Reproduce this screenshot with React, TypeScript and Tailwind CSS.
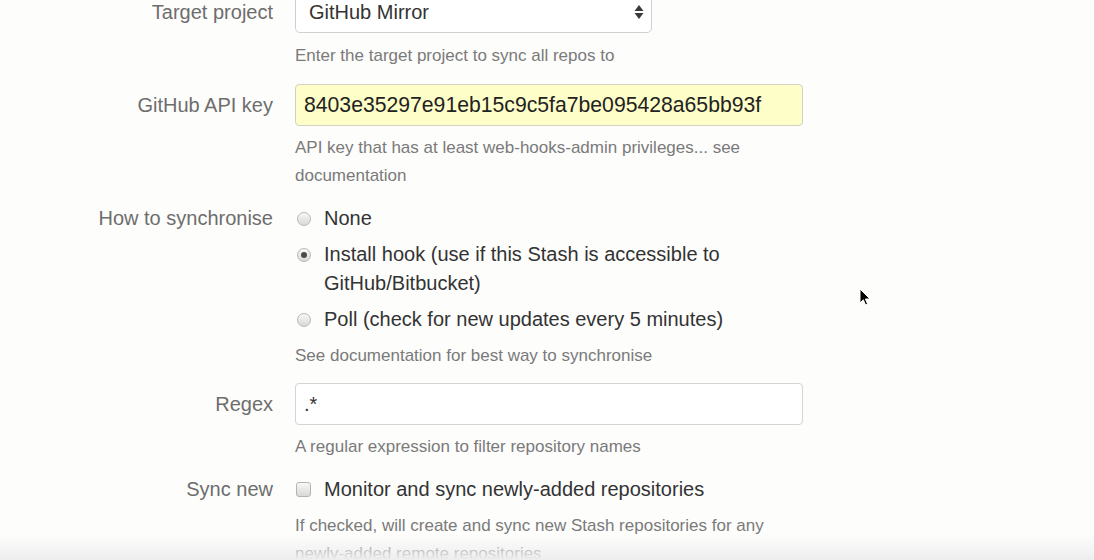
import React from 'react';

const font = { fontFamily: '"Liberation Sans", Arial, Helvetica, sans-serif' };

function Label({ children, lh }: { children: React.ReactNode; lh: string }) {
    return <div className={`w-[273px] shrink-0 text-right text-[20px] text-[#6d6d6d] ${lh}`}>{children}</div>;
}

function Help({ children }: { children: React.ReactNode }) {
    return <p className="mt-[8px] text-[17px] leading-[28px] text-[#7a7a7a]">{children}</p>;
}

function Radio({ checked }: { checked?: boolean }) {
    return (
        <span className="mt-[7.5px] flex h-[14px] w-[14px] shrink-0 items-center justify-center rounded-full border border-[#b8b8b8] bg-gradient-to-b from-[#f8f8f8] to-[#d9d9d9]">
            {checked && <span className="h-[6px] w-[6px] rounded-full bg-[#4a4a4a]" />}
        </span>
    );
}

function Option({ checked, children }: { checked?: boolean; children: React.ReactNode }) {
    return (
        <div className="flex gap-[13px] pl-[2px]">
            <Radio checked={checked} />
            <span className="text-[20px] leading-[29px] text-[#333]">{children}</span>
        </div>
    );
}

export default function App() {
    return (
        <div style={font} className="relative h-[560px] w-[1094px] overflow-hidden bg-[#fdfdfc]">
            <div className="mt-[-9px]">
                {/* Target project */}
                <div className="flex pb-[14px]">
                    <Label lh="leading-[42px]">Target project</Label>
                    <div className="ml-[22px] w-[508px]">
                        <div className="flex h-[42px] w-[357px] items-center justify-between rounded-[5px] border border-[#d0d0d0] bg-white pl-[13px] pr-[7px]">
                            <span className="text-[20px] text-[#333]">GitHub Mirror</span>
                            <svg width="10" height="18" viewBox="0 0 10 18">
                                <path d="M5 2 L9.5 8 L0.5 8 Z" fill="#3a3a3a" />
                                <path d="M0.5 10 L9.5 10 L5 16 Z" fill="#3a3a3a" />
                            </svg>
                        </div>
                        <p className="mt-[9px] text-[17px] leading-[28px] text-[#7a7a7a]">Enter the target project to sync all repos to</p>
                    </div>
                </div>

                {/* API key */}
                <div className="flex pb-[14px]">
                    <Label lh="leading-[42px]">GitHub API key</Label>
                    <div className="ml-[22px] w-[508px]">
                        <div className="flex h-[42px] items-center rounded-[4px] border border-[#d2d2c4] bg-[#fefec8] pl-[8px] text-[21.2px] text-[#222]">
                            8403e35297e91eb15c9c5fa7be095428a65bb93f
                        </div>
                        <Help>API key that has at least web-hooks-admin privileges... see documentation</Help>
                    </div>
                </div>

                {/* Sync method */}
                <div className="flex pb-[13px]">
                    <Label lh="leading-[29px]">How to synchronise</Label>
                    <div className="ml-[22px] w-[508px]">
                        <div className="flex flex-col gap-[7px]">
                            <Option>None</Option>
                            <Option checked>
                                Install hook (use if this Stash is accessible to
                                <br />
                                GitHub/Bitbucket)
                            </Option>
                            <Option>Poll (check for new updates every 5 minutes)</Option>
                        </div>
                        <Help>See documentation for best way to synchronise</Help>
                    </div>
                </div>

                {/* Regex */}
                <div className="flex pb-[14px]">
                    <Label lh="leading-[42px]">Regex</Label>
                    <div className="ml-[22px] w-[508px]">
                        <div className="flex h-[42px] items-center rounded-[4px] border border-[#d4d4d4] bg-white pl-[8px] text-[20px] text-[#333]">
                            .*
                        </div>
                        <Help>A regular expression to filter repository names</Help>
                    </div>
                </div>

                {/* Sync new */}
                <div className="flex">
                    <Label lh="leading-[29px]">Sync new</Label>
                    <div className="ml-[22px] w-[508px]">
                        <div className="flex gap-[13px] pl-[1px]">
                            <span className="mt-[7px] h-[15px] w-[15px] shrink-0 rounded-[3px] border border-[#b3b3b3] bg-gradient-to-b from-[#f8f8f8] to-[#d8d8d8]" />
                            <span className="text-[20px] leading-[29px] text-[#333]">Monitor and sync newly-added repositories</span>
                        </div>
                        <Help>If checked, will create and sync new Stash repositories for any newly-added remote repositories</Help>
                    </div>
                </div>
            </div>

            {/* bottom shade */}
            <div className="pointer-events-none absolute bottom-0 left-0 h-[26px] w-full bg-gradient-to-b from-transparent to-[#eeeeee]" />

            {/* mouse cursor */}
            <svg className="absolute left-[859px] top-[288px]" width="12" height="19" viewBox="0 0 12 19">
                <path d="M1 1 L1 15 L4.3 11.8 L6.6 17 L8.6 16.1 L6.4 11 L11 11 Z" fill="#000" stroke="#fff" strokeWidth="1" strokeLinejoin="round" />
            </svg>
        </div>
    );
}
